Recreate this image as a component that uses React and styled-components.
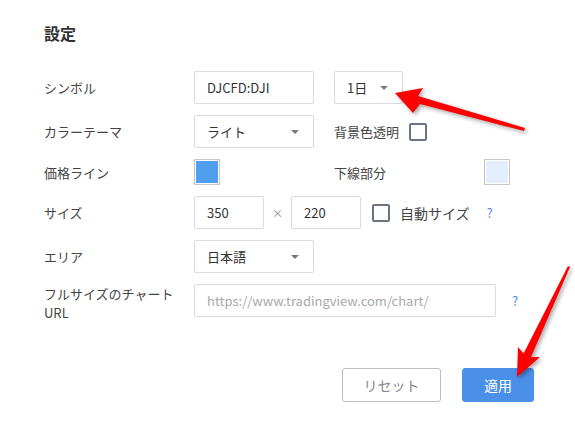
import React from 'react';
import styled, { createGlobalStyle } from 'styled-components';

const GlobalStyle = createGlobalStyle`
    body {
        margin: 0;
        background: #fff;
        font-family: "Noto Sans CJK JP", "Noto Sans", sans-serif;
        color: #444;
    }
`;

const Page = styled.div`
    position: relative;
    width: 575px;
    height: 432px;
    padding: 25px 41px 0 44px;
    box-sizing: border-box;
    overflow: hidden;
`;

const Heading = styled.h2`
    margin: 0 0 30px;
    font-size: 16px;
    line-height: 16px;
    font-weight: bold;
    color: #333;
`;

const Rows = styled.div`
    display: flex;
    flex-direction: column;
    gap: 11px;
`;

const Row = styled.div`
    display: flex;
    align-items: ${p => (p.$top ? 'flex-start' : 'center')};
    min-height: ${p => p.$height || 33}px;
`;

const Label = styled.div`
    width: 150px;
    flex: none;
    font-size: 13px;
    line-height: 19px;
    color: #444;
`;

const SubLabel = styled.div`
    font-size: 13px;
    line-height: 19px;
`;

const Field = styled.div`
    width: ${p => p.$width}px;
    height: 33px;
    box-sizing: border-box;
    border: 1px solid #d9dbde;
    border-radius: 2px;
    padding: 0 12px;
    display: flex;
    align-items: center;
    justify-content: space-between;
    font-size: 13px;
    color: ${p => (p.$placeholder ? '#a9a9a9' : '#333')};
    flex: none;
`;

const Caret = styled.span`
    width: 0;
    height: 0;
    border-left: 4px solid transparent;
    border-right: 4px solid transparent;
    border-top: 4px solid #7a7a7a;
    margin-right: 2px;
`;

const Gap = styled.div`
    width: ${p => p.$w}px;
    flex: none;
`;

const Text = styled.span`
    font-size: ${p => p.$size || 13}px;
    color: #444;
    flex: none;
`;

const Times = styled.span`
    width: 27px;
    text-align: center;
    font-size: 11px;
    color: #888;
    flex: none;
`;

const Check = styled.span`
    width: 18px;
    height: 18px;
    box-sizing: border-box;
    border: 2px solid #6b7480;
    border-radius: 2px;
    flex: none;
`;

const Swatch = styled.span`
    width: 26px;
    height: 26px;
    box-sizing: border-box;
    border: 1px solid #c8c8c8;
    padding: 1px;
    background: #fff;
    flex: none;
    display: flex;

    &::after {
        content: '';
        flex: 1;
        background: ${p => p.$color};
    }
`;

const Help = styled.span`
    font-size: 13px;
    color: #4a8ee6;
    flex: none;
`;

const Actions = styled.div`
    display: flex;
    justify-content: flex-end;
    gap: 21px;
    margin-top: 46px;
`;

const Button = styled.button`
    width: ${p => p.$width}px;
    height: 34px;
    border-radius: 3px;
    font-family: inherit;
    font-size: 14px;
    cursor: pointer;
    border: 1px solid ${p => (p.$primary ? '#4a8fe8' : '#bdbdbd')};
    background: ${p => (p.$primary ? '#4a8fe8' : '#fff')};
    color: ${p => (p.$primary ? '#fff' : '#888')};
`;

const Marks = styled.svg`
    position: absolute;
    left: 0;
    top: 0;
    pointer-events: none;
    filter: drop-shadow(2px 2px 2px rgba(0, 0, 0, 0.35));
`;

export default function App() {
    return (
        <Page>
            <GlobalStyle />
            <Heading>設定</Heading>
            <Rows>
                <Row>
                    <Label>シンボル</Label>
                    <Field $width={120}>DJCFD:DJI</Field>
                    <Gap $w={20} />
                    <Field $width={69}>1日<Caret /></Field>
                </Row>
                <Row>
                    <Label>カラーテーマ</Label>
                    <Field $width={120}>ライト<Caret /></Field>
                    <Gap $w={20} />
                    <Text>背景色透明</Text>
                    <Gap $w={10} />
                    <Check />
                </Row>
                <Row $height={26}>
                    <Label>価格ライン</Label>
                    <Swatch $color="#4f9fee" />
                    <Gap $w={114} />
                    <Text style={{ width: 150 }}>下線部分</Text>
                    <Swatch $color="#e3effc" />
                </Row>
                <Row>
                    <Label>サイズ</Label>
                    <Field $width={70}>350</Field>
                    <Times>×</Times>
                    <Field $width={70}>220</Field>
                    <Gap $w={11} />
                    <Check />
                    <Gap $w={10} />
                    <Text $size={14}>自動サイズ</Text>
                    <Gap $w={17} />
                    <Help>?</Help>
                </Row>
                <Row>
                    <Label>エリア</Label>
                    <Field $width={120}>日本語<Caret /></Field>
                </Row>
                <Row $top>
                    <Label>
                        フルサイズのチャート
                        <SubLabel>URL</SubLabel>
                    </Label>
                    <Field $width={302} $placeholder>https://www.tradingview.com/chart/</Field>
                    <Gap $w={16} />
                    <Help style={{ lineHeight: '33px' }}>?</Help>
                </Row>
            </Rows>
            <Actions>
                <Button $width={99}>リセット</Button>
                <Button $width={72} $primary>適用</Button>
            </Actions>
            <Marks width="575" height="432" viewBox="0 0 575 432">
                <polygon
                    fill="#ff0000"
                    points="395,93 423,88 418,96 525,128 524,131 420,104 413,113"
                />
                <polygon
                    fill="#ff0000"
                    points="517,377 518,347 523.6,353.6 568,266 570,267 531,357 540,357"
                />
            </Marks>
        </Page>
    );
}
